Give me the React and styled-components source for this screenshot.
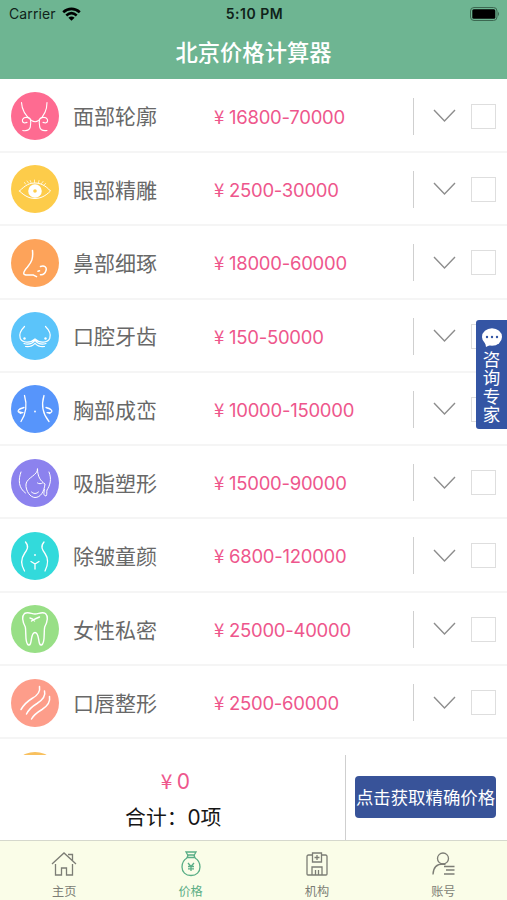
import React from "react";
import styled, { createGlobalStyle } from "styled-components";

const cjk = '"Noto Sans CJK SC", sans-serif';

const GlobalStyle = createGlobalStyle`
  * { box-sizing: border-box; }
  body { margin: 0; background: #fff; }
  svg { display: block; flex: none; }
`;

const Screen = styled.div`
  position: relative;
  display: flex;
  flex-direction: column;
  width: 507px;
  height: 900px;
  overflow: hidden;
  background: #fff;
  font-family: Inter, ${cjk};
`;

const Header = styled.header`
  flex: none;
  height: 79px;
  background: #6eb592;
`;

const StatusBar = styled.div`
  display: grid;
  grid-template-columns: 1fr auto 1fr;
  align-items: center;
  height: 27px;
  padding: 0 7px 0 9px;
  font-size: 14px;
  line-height: 27px;
  color: #10231a;
`;

const Carrier = styled.div`
  display: flex;
  align-items: center;
  gap: 6px;
  letter-spacing: 0.12px;
`;

const Clock = styled.div`
  font-weight: 600;
  font-size: 14px;
  letter-spacing: 0.5px;
`;

const Battery = styled.svg`
  justify-self: end;
`;

const Title = styled.h1`
  margin: 0;
  height: 50px;
  font: 500 22.3px/48px ${cjk};
  text-align: center;
  color: #fff;
`;

const List = styled.main`
  flex: 1;
  min-height: 0;
  padding-top: 0.7px;
  overflow: hidden;
`;

const Row = styled.div`
  display: flex;
  align-items: center;
  height: 73.3px;
  padding: 1.6px 11px 0;
  border-bottom: 2px solid #f5f5f5;
`;

const Name = styled.div`
  width: 141px;
  margin: -1.4px 0 0 14px;
  font: 400 21px/30px ${cjk};
  color: #686868;
`;

const Price = styled.div`
  display: flex;
  align-items: center;
  flex: 1;
  padding-top: 1px;
  font-size: 18.5px;
  line-height: 28px;
  color: #ee568c;
  white-space: nowrap;
`;

const Yen = styled.span`
  width: ${(p) => p.$width || 15}px;
  margin-top: -2px;
  font-family: ${cjk};
`;

const Amount = styled.span`
  letter-spacing: -0.26px;
`;

const Divider = styled.div`
  width: 1px;
  height: 37px;
  margin-right: 19px;
  background: #cfcfcf;
`;

const CheckBox = styled.div`
  width: 25px;
  height: 25px;
  margin-left: 15px;
  border: 1px solid #dedede;
`;

const Consult = styled.aside`
  position: absolute;
  z-index: 1;
  top: 320px;
  right: 0;
  display: flex;
  flex-direction: column;
  align-items: center;
  width: 31px;
  height: 109px;
  padding-top: 8px;
  border-radius: 3px 0 0 3px;
  background: #3455a4;
  color: #fff;
`;

const ConsultText = styled.div`
  width: 18px;
  margin-top: 3px;
  font: 400 17.5px/18.3px ${cjk};
  text-align: center;
`;

const Summary = styled.section`
  display: flex;
  flex: none;
  height: 85px;
  background: #fff;
`;

const Totals = styled.div`
  display: flex;
  flex-direction: column;
  align-items: center;
  width: 345.5px;
  padding-top: 9px;
  border-right: 1px solid #cfcfcf;
`;

const TotalPrice = styled.div`
  display: flex;
  align-items: center;
  height: 35px;
  padding-left: 6px;
  font-size: 21px;
  line-height: 35px;
  color: #ee568c;
`;

const TotalCount = styled.div`
  margin-left: 2px;
  font: 400 20.8px/37px Inter, ${cjk};
  color: #161616;
`;

const QuoteButton = styled.button`
  width: 141px;
  height: 42px;
  margin: 21px 0 0 9.5px;
  padding: 0;
  border: 0;
  border-radius: 4px;
  background: #385399;
  color: #fff;
  font: 400 17.4px/42px ${cjk};
  white-space: nowrap;
`;

const TabBar = styled.nav`
  display: grid;
  grid-template-columns: repeat(4, 126.4px);
  flex: none;
  height: 60px;
  border-top: 1px solid #d5d8cd;
  background: #fafde8;
`;

const Tab = styled.div`
  display: flex;
  flex-direction: column;
  align-items: center;
  padding: 10px 0 0 2px;
  color: ${(p) => (p.$active ? "#5aae86" : "#7c7d75")};
  font: 400 12.2px/18px ${cjk};
`;

const TabLabel = styled.div`
  margin-top: 4px;
`;

const Line = ({ children, w = 1.1 }) => (
  <g fill="none" stroke="#fff" strokeWidth={w} strokeLinecap="round" strokeLinejoin="round">
    {children}
  </g>
);

const Medallion = ({ color, children }) => (
  <svg width="48" height="48" viewBox="0 0 48 48">
    <circle cx="24" cy="24" r="24" fill={color} />
    {children}
  </svg>
);

const art = {
  face: (
    <Line>
      <path d="M10.500 10.500c.4 8 5.500 14.500 10 18 2.600 1.700 4.700 1.700 7 0 4.500-3.500 8.500-10 8.500-18" />
      <path d="M13 25.800c2-.6 4.500-.3 6 .7M35 25.800c-2-.6-4.500-.3-6 .7M13 26c-2.500 1.500-2 4.500.5 5l2.500-.6M35 26c2.500 1.500 2 4.500-.5 5l-2.500-.6M19.500 28.500c.8 2.500-.2 4-.2 6.500-.8 3.200-4.300 4-7.500 3.500M28.500 28.500c-.8 2.500.2 4 .2 6.500.8 3.200 4 4 7.300 3.500" />
    </Line>
  ),
  eye: (
    <>
      <Line w={1}>
        <path d="M8.500 26c6-6 10-8 15.500-8s10.500 2.500 15.500 8c-5 5-10 7.500-15.500 7.500S13.500 31 8.500 26Z" />
        <path d="m14.500 19-1-1.500m4 .5-1.500-2m4 1.500-.8-2m4.300 2v-2.500m4 2.800.5-2.300m2.500 3 1.500-2m1 3.500 1.700-1.500" strokeWidth=".7" />
      </Line>
      <circle cx="24" cy="26" r="4.300" fill="none" stroke="#fff" strokeWidth="5" />
    </>
  ),
  nose: (
    <Line w={1.5}>
      <path d="M21.500 11.500c.8 8-.8 11.500-5 16.500-3.200 3.600-4.700 6-3.300 7.300 2.300 1.500 6.200.3 9.300.8l3 1.500M29.500 27.500c4-1.500 6.500.8 5.500 4-.8 2.600-3 4.500-5.500 4.200M27 32.200l1.500-.4" />
    </Line>
  ),
  bust: (
    <>
      <Line w={1.200}>
        <path d="M13.500 14.500c-4 4-5.500 8.500-4.300 11.700 2 4.700 10.300 5.300 14.800.8 4.500 4.500 12.800 3.900 14.800-.8 1.200-3.200-.3-7.700-4.300-11.700M13 31.500c4.500 1.300 8 .5 11-3.200 3 3.700 6.500 4.500 11 3.200M14.500 34.500c4 .6 7-.5 9.500-3.200 2.500 2.700 5.500 3.800 9.500 3.200" />
      </Line>
      <circle cx="13.500" cy="26.500" r="1.200" fill="#fff" />
      <circle cx="34.500" cy="26.500" r="1.200" fill="#fff" />
    </>
  ),
  waist: (
    <>
      <Line w={1.300}>
        <path d="M13.500 10.500c2.700 9 1.700 18-3.500 26M33 10.500c-2.700 9-1.700 18 5 26M13 22.500c-6 1.500-7.500 4-4 5.500l3-.4M35 22.500c6 1.500 7.500 4 4 5.500l-3-.4" />
      </Line>
      <path d="m7.500 26 4 1-2 2.300zm32.500 1-4 .3 3 2z" fill="#fff" />
      <circle cx="24" cy="26.500" r=".9" fill="#fff" />
    </>
  ),
  portrait: (
    <Line w={1}>
      <path d="M10 13c-3 8-2.500 16 4.500 21M38 13c3 7 1 13.500-2 18-.7 2.500.5 4-1 6-2.500-.5-2.500-2-1.500-6.500M26.500 10c.8 6-10.500 8.500-11.500 15-.6 7 4.500 13.500 9 13.500 5.500 0 9-5.500 10-13.500-4.500-3-7.500-7.500-7.500-15M20.500 33c2.300 2 4.700 2 7 0M26.500 24c1.500 1 3.500 1 5 0" />
    </Line>
  ),
  body: (
    <>
      <Line w={1.300}>
        <path d="M14.500 10c4 4.500 1.500 8-1 11.500-3.500 5-3.600 11.500 0 17.500M33 10c-4 4.500-1.500 8 1 11.500 3.500 5 3.100 11.500 0 17.500M20 29.500l4 2.500 4-2.500M24 32v5" />
      </Line>
      <circle cx="24" cy="23" r=".9" fill="#fff" />
    </>
  ),
  tooth: (
    <Line w={1.400}>
      <path d="M13.500 8.500c4-2 7 .5 10.500.5s7-2.500 10.500-.5c3.500 3.500 1.500 9-.8 13.500-1.200 5 .8 16.500-3.200 18-4 1-1.500-12.500-6.500-12.500S21.500 41 17.500 40c-4-1.500-2-13-3.200-18-2.300-4.500-4.300-10-.8-13.500ZM19 13c2 .5 3.500 1.300 4.500 3m5-4c-2.500 1-6 2.500-8 4" />
    </Line>
  ),
  waves: (
    <Line w={1.500}>
      <path d="M28.500 7.500c1 5-2 9-7.500 12C16 22.500 13 25.500 10 30.500M33.500 12c1.500 5-2 9-7.500 12.500C21 27.500 18 30 15.500 35M38.500 17.500c1 5-2 9.500-7.500 13-5 3-8 5-10.500 9.500" />
    </Line>
  ),
};

const rows = [
  ["面部轮廓", "16800-70000", "#fe6b91", "face"],
  ["眼部精雕", "2500-30000", "#fdcc4a", "eye"],
  ["鼻部细琢", "18000-60000", "#fda35a", "nose"],
  ["口腔牙齿", "150-50000", "#5bc4fa", "bust"],
  ["胸部成峦", "10000-150000", "#5795fb", "waist"],
  ["吸脂塑形", "15000-90000", "#8c82ee", "portrait"],
  ["除皱童颜", "6800-120000", "#32dadb", "body"],
  ["女性私密", "25000-40000", "#98df86", "tooth"],
  ["口唇整形", "2500-60000", "#fd9d8a", "waves"],
];

const Chevron = () => (
  <svg width="23" height="14" viewBox="0 0 23 14" fill="none" stroke="#8d8d8d" strokeWidth="1.400">
    <path d="m1 1 10.500 11L22 1" />
  </svg>
);

const tabIcons = {
  home: (
    <>
      <path d="m1 13 12-11 12 11M4.500 13v11h6v-7h5v7h6V13M17 3.500h4.500v6" />
    </>
  ),
  price: (
    <>
      <path d="M8 1h10l-2 3.500 1 2H9l1-2-2-3.500ZM9 4h8M9 7C5.500 9 4 12 4 16c0 5 3.500 8.500 9 8.500s9-3.500 9-8.500c0-4-1.500-7-5-9" />
      <path d="m10 12 3 3.500 3-3.500m-3 3.500V20m-3-4.500h6m-6 2.300h6" />
    </>
  ),
  clinic: (
    <>
      <path d="M8 4H4.500Q3 4 3 5.500V23q0 1 1 1h18q1 0 1-1V5.500Q23 4 21.500 4H18M8.500 2h9v9h-9zM13 4v5M10.500 6.500h5M8 24v-8h10v8M11.500 24v-5M14.500 24v-5" />
    </>
  ),
  account: (
    <>
      <circle cx="13" cy="7.500" r="5.500" />
      <path d="M3 23.500c.2-6.500 3.500-10.500 10-10.500l2.500.5M14 15.500h10.500M16 19h8.500M14 23h10.500" />
    </>
  ),
};

const tabs = [
  ["主页", "home"],
  ["价格", "price"],
  ["机构", "clinic"],
  ["账号", "account"],
];

export default function App() {
  return (
    <Screen>
      <GlobalStyle />
      <Header>
        <StatusBar>
          <Carrier>
            Carrier
            <svg width="19" height="14" viewBox="0 0 19 14" fill="none" stroke="#000" strokeWidth="2.600">
              <path d="M1.200 5.200c4.900-4.500 11.700-4.500 16.600 0M4.300 8.500c3.200-2.800 7.200-2.800 10.400 0" />
              <path d="M6.400 10.700c2-1.500 4.200-1.500 6.200 0l-3.100 3z" fill="#000" stroke="none" />
            </svg>
          </Carrier>
          <Clock>5:10 PM</Clock>
          <Battery width="30" height="14" viewBox="0 0 30 14">
            <rect x=".5" y=".5" width="26.500" height="13" rx="3.500" fill="none" stroke="#3c6851" />
            <rect x="2.300" y="2.300" width="23" height="9.400" rx="1.500" fill="#000" />
            <path d="M28 4.800q2 2.200 0 4.400z" fill="#3c6851" />
          </Battery>
        </StatusBar>
        <Title>北京价格计算器</Title>
      </Header>
      <List>
        {rows.map(([name, amount, color, icon]) => (
          <Row key={name}>
            <Medallion color={color}>{art[icon]}</Medallion>
            <Name>{name}</Name>
            <Price>
              <Yen>¥</Yen>
              <Amount>{amount}</Amount>
            </Price>
            <Divider />
            <Chevron />
            <CheckBox />
          </Row>
        ))}
        <Row>
          <Medallion color="#f8c05e" />
        </Row>
      </List>
      <Summary>
        <Totals>
          <TotalPrice>
            <Yen $width={16}>¥</Yen>0
          </TotalPrice>
          <TotalCount>合计：0项</TotalCount>
        </Totals>
        <QuoteButton>点击获取精确价格</QuoteButton>
      </Summary>
      <TabBar>
        {tabs.map(([label, icon]) => (
          <Tab key={label} $active={icon === "price"}>
            <svg width="26" height="27" viewBox="0 0 26 27" fill="none" stroke="currentColor" strokeWidth="1.300">
              {tabIcons[icon]}
            </svg>
            <TabLabel>{label}</TabLabel>
          </Tab>
        ))}
      </TabBar>
      <Consult>
        <svg width="20" height="19" viewBox="0 0 20 19">
          <ellipse cx="10" cy="9" rx="10" ry="8.700" fill="#fff" />
          <path d="m3 14 1 5 6-3z" fill="#fff" />
          <g fill="#3455a4">
            <circle cx="5" cy="9" r="1.200" />
            <circle cx="10" cy="9" r="1.200" />
            <circle cx="15" cy="9" r="1.200" />
          </g>
        </svg>
        <ConsultText>咨询专家</ConsultText>
      </Consult>
    </Screen>
  );
}
